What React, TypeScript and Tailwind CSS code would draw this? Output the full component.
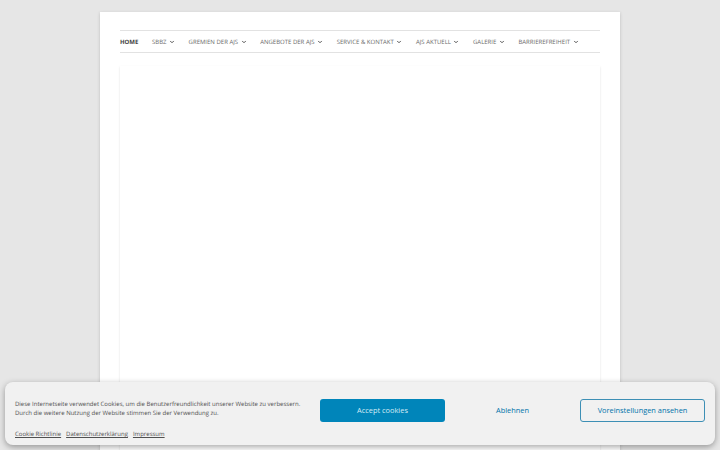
import { ChevronDown } from 'lucide-react';

const menu = ['SBBZ', 'GREMIEN DER AJS', 'ANGEBOTE DER AJS', 'SERVICE & KONTAKT', 'AJS AKTUELL', 'GALERIE', 'BARRIEREFREIHEIT'];

const App = () => {
  return (
    <div className="relative h-[450px] w-[720px] overflow-hidden bg-[#e6e6e6] font-['Open_Sans',sans-serif] antialiased [text-rendering:geometricPrecision]">
      <div className="mx-auto mt-3 h-[500px] w-[520px] bg-white px-5 pt-[18px] shadow-[0_1px_3px_rgba(100,100,100,0.3)]">
        <nav className="flex h-[23px] items-center gap-[13.6px] whitespace-nowrap border-y border-[#e2e2e2] pt-px text-[6px] text-[#6a6a6a]">
          <span className="font-bold text-[#444]">HOME</span>
          {menu.map((m) => (
            <span key={m} className="flex items-center gap-[2.5px]">
              {m}
              <ChevronDown size={6} strokeWidth={4} className="text-[#555]" />
            </span>
          ))}
        </nav>
        <div className="mt-[13px] h-[420px] w-[480px] bg-white shadow-[0_1px_2px_rgba(100,100,100,0.2)]" />
      </div>

      <div className="absolute bottom-[5px] left-[5px] flex h-[63px] w-[710px] items-start rounded-[8px] bg-[#f1f1f1] px-[10px] pt-[17px] shadow-[0_2px_6px_rgba(0,0,0,0.35)]">
        <div className="mt-[0.5px] w-[305px] whitespace-nowrap text-[6px] text-[#505050]">
          <p className="leading-[9px]">
            Diese Internetseite verwendet Cookies, um die Benutzerfreundlichkeit unserer Website zu verbessern.
            <br />
            Durch die weitere Nutzung der Website stimmen Sie der Verwendung zu.
          </p>
          <div className="mt-[12.5px] flex gap-[5px] underline">
            <span>Cookie Richtlinie</span>
            <span>Datenschutzerklärung</span>
            <span>Impressum</span>
          </div>
        </div>
        <div className="flex flex-1 items-center justify-between text-[7.4px]">
          <button className="flex h-[23px] w-[125px] items-center justify-center rounded-[3px] bg-[#0085ba] text-[#d5ebf5]">
            Accept cookies
          </button>
          <button className="flex h-[23px] w-[125px] items-center justify-center text-[#0073aa]">Ablehnen</button>
          <button className="flex h-[23px] w-[125px] items-center justify-center rounded-[3px] border border-[#3d8fb5] text-[#0073aa]">
            Voreinstellungen ansehen
          </button>
        </div>
      </div>
    </div>
  );
};

export default App;
